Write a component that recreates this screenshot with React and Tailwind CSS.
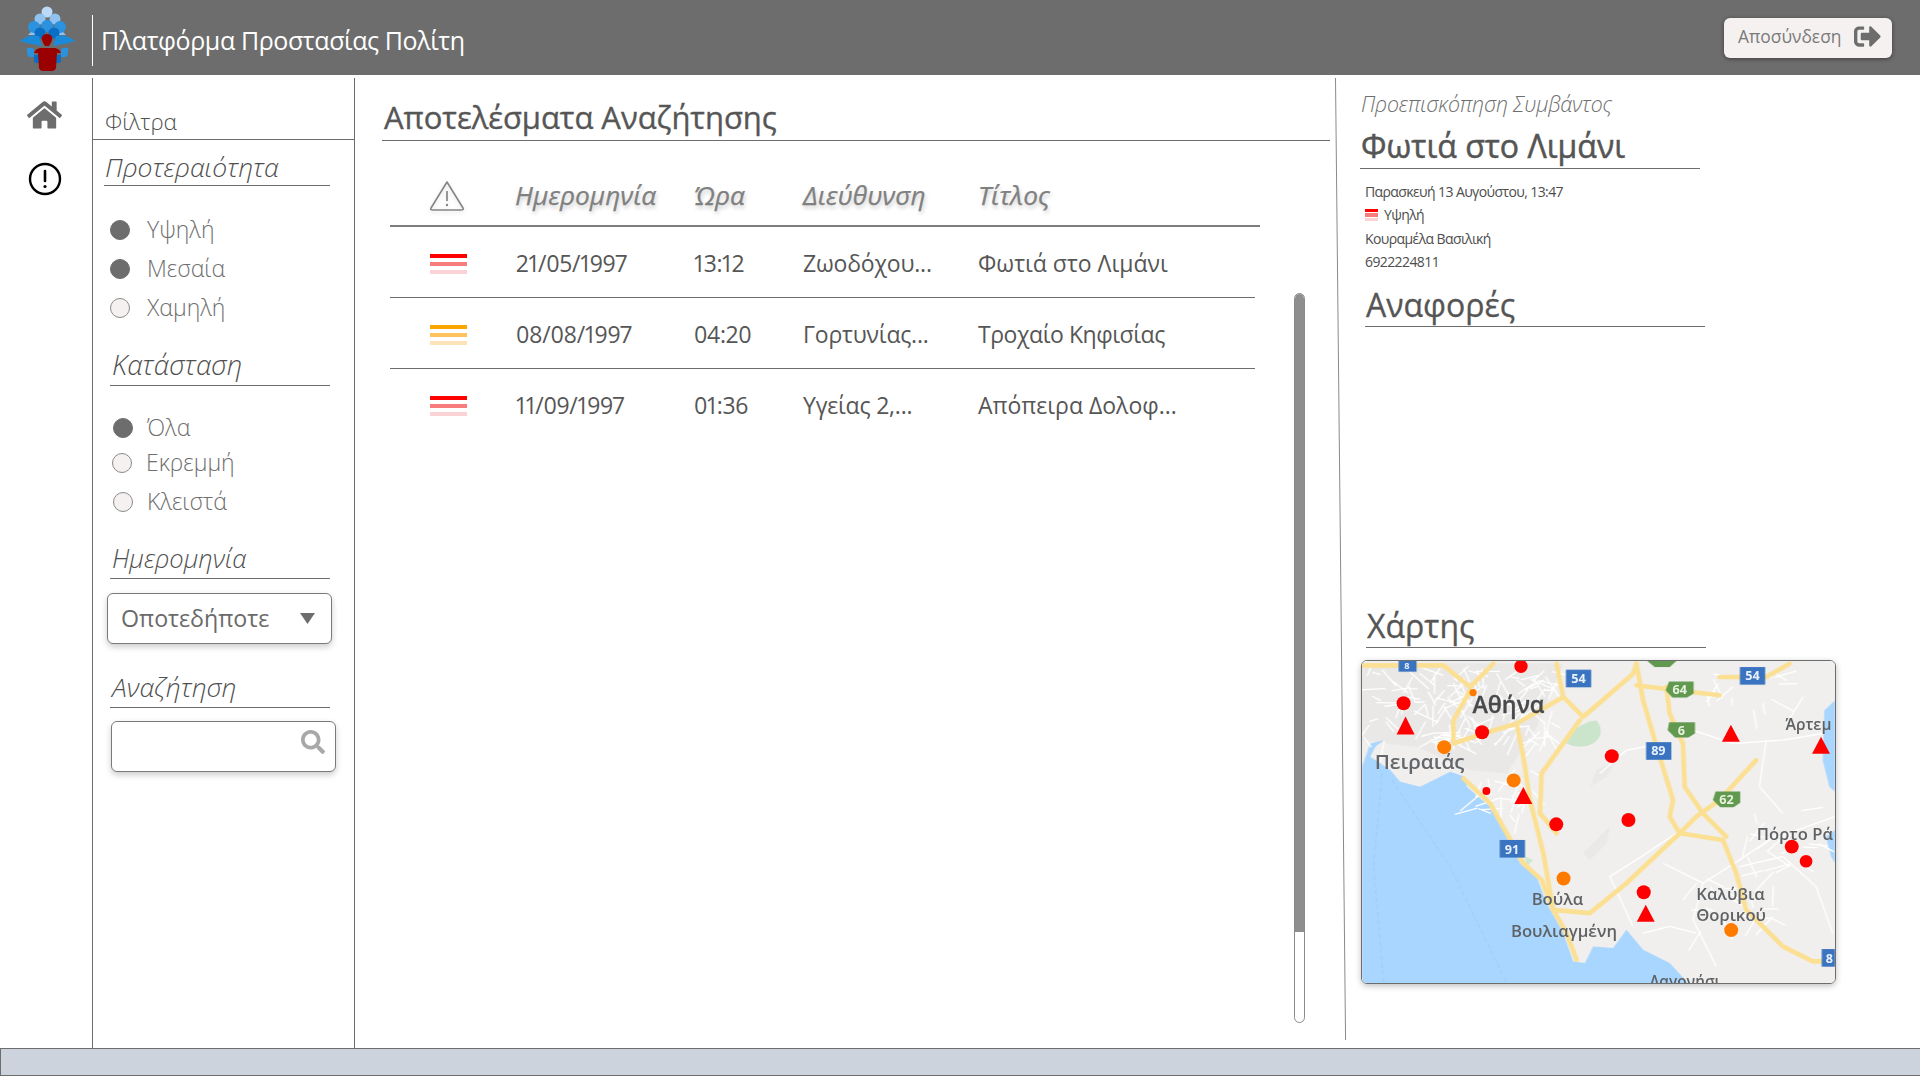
import React from "react";
import { FaHome, FaSearch, FaSignOutAlt } from "react-icons/fa";

const F = { fontFamily: '"Open Sans", "Noto Sans", sans-serif' };

function Logo() {
  return (
    <svg width="60" height="66" viewBox="18 6 60 66" className="shrink-0">
      <circle cx="48" cy="12" r="5.5" fill="#bcdaf6" />
      <circle cx="41" cy="19" r="5.5" fill="#8fc2ef" />
      <circle cx="56" cy="19" r="5.5" fill="#8fc2ef" />
      <path d="M29 35 L33 31 L38 35 Z" fill="#8fc2ef" />
      <path d="M67 35 L63 31 L58 35 Z" fill="#8fc2ef" />
      <circle cx="35" cy="27" r="6" fill="#2a92de" />
      <circle cx="48" cy="26" r="6" fill="#2a92de" />
      <circle cx="61" cy="27" r="6" fill="#2a92de" />
      <circle cx="41" cy="33" r="5.5" fill="#0a6ec4" />
      <circle cx="55" cy="33" r="5.5" fill="#0a6ec4" />
      <path d="M21 41 Q30 34 40 36 L43 46 L27 43 Z" fill="#1b8ad8" />
      <path d="M76 41 Q67 34 57 36 L54 46 L70 43 Z" fill="#1b8ad8" />
      <path d="M28 48 h5 q2 0 2 3 v6 h-4 q-3 -1 -3 -4 Z" fill="#2a92de" />
      <path d="M69 48 h-5 q-2 0 -2 3 v6 h4 q3 -1 3 -4 Z" fill="#2a92de" />
      <path d="M35 55 h5 v8 h-3 q-2 0 -2 -2 Z" fill="#0a6ec4" />
      <path d="M62 55 h-5 v8 h3 q2 0 2 -2 Z" fill="#0a6ec4" />
      <path d="M48 34 c4 0 6 3 5 6 c-1 3 -2 4 -3 6 h-4 c-1 -2 -2 -3 -3 -6 c-1 -3 1 -6 5 -6 Z" fill="#9a0000" />
      <path d="M35 53 q1 -4 6 -5 h15 q5 1 6 5 h-4 l-1 15 q-1 3 -4 3 h-9 q-3 0 -4 -3 l-1 -15 Z" fill="#9a0000" />
    </svg>
  );
}

function Bars({ c, w = "w-[37px]", h = "h-1", gap = "gap-1" }) {
  const colors = c === "red" ? ["bg-[#ff0000]", "bg-[#f87c7c]", "bg-[#fbd3d6]"] : ["bg-[#ffa500]", "bg-[#ffc25c]", "bg-[#ffe3b8]"];
  return (
    <div className={`flex flex-col ${gap} ${w}`}>
      {colors.map((x) => (
        <div key={x} className={`${h} ${x}`} />
      ))}
    </div>
  );
}

function Radio({ on, label, dotClass, rowClass = "h-[39px]" }) {
  return (
    <div className={`flex items-center ${rowClass}`}>
      <span className={`w-5 h-5 rounded-full shrink-0 border ${dotClass} ${on ? "bg-[#6d6d6d] border-[#6d6d6d]" : "bg-[#f4f1f0] border-[#8a8a8a]"}`} />
      <span className="text-[23px] font-light text-[#6f6f6f] leading-none">{label}</span>
    </div>
  );
}

function FilterHead({ children, className = "ml-[17px] w-[220px]", textClass = "text-[26.5px] pl-[2px] pb-[3px]" }) {
  return (
    <div className={`border-b border-[#6d6d6d] ${className}`}>
      <div className={`italic font-light text-[#4f4f4f] leading-[34px] ${textClass}`}>{children}</div>
    </div>
  );
}

function Row({ c, date, time, addr, title, border, titleClass = "" }) {
  return (
    <div className={`flex items-center h-[71px] pt-[2px] ${border ? "border-b border-[#6d6d6d] w-[865px]" : ""} text-[23px] text-[#565656]`}>
      <div className="w-[125px] pl-[40px] shrink-0 pt-[1px]"><Bars c={c} /></div>
      <div className="w-[178px] shrink-0 pl-[1px] proportional-nums tracking-[-0.3px]">{date}</div>
      <div className="w-[110px] shrink-0 pl-[1px] proportional-nums tracking-[-0.3px]">{time}</div>
      <div className="w-[175px] shrink-0 tracking-[-0.2px]">{addr}</div>
      <div className={titleClass}>{title}</div>
    </div>
  );
}

const streets = (() => {
  const out = [];
  let s = 7;
  const r = () => {
    s = (s * 16807) % 2147483647;
    return s / 2147483647;
  };
  const areas = [
    [40, 190, 330, 240, 70],
    [340, 200, 280, 240, 70],
    [380, 500, 170, 150, 22],
    [1050, 210, 350, 120, 16],
    [1180, 620, 260, 200, 20],
    [1020, 830, 260, 180, 18],
  ];
  areas.forEach(([x, y, w, h, n]) => {
    for (let i = 0; i < n; i++) {
      const a = x + r() * w;
      const b = y + r() * h;
      const ang = r() * Math.PI;
      const len = 25 + r() * 60;
      out.push(`M${a.toFixed(0)} ${b.toFixed(0)} L${(a + Math.cos(ang) * len).toFixed(0)} ${(b + Math.sin(ang) * len).toFixed(0)}`);
    }
  });
  return out.join(" ");
})();

function Map() {
  const road = "#fbdf92";
  return (
    <svg viewBox="35 182 1422 968" className="w-full h-full block" preserveAspectRatio="none">
      <rect x="35" y="182" width="1422" height="968" fill="#f0efed" />
      <g className="blur-[1.2px]">
        <path fill="#e2e2e2" opacity="0.5" d="M35 190 H640 L560 380 L470 520 L360 510 L200 440 L35 420 Z" />
        <path fill="#e6e5e2" opacity="0.6" d="M740 510 L800 480 L770 530 L720 560 Z" />
        <path fill="#e6e5e2" opacity="0.6" d="M700 760 L780 680 L770 730 L720 780 Z" />
        <path fill="#cbe5cc" d="M650 430 Q670 370 740 360 Q770 400 730 430 Q690 450 650 430 Z" />
        <path fill="#cfe6d0" d="M525 770 L550 780 L530 800 Z" />
        <path fill="#a9d6fe" d="M35 1150 V500 L60 430 L100 420 L75 440 L60 470 L120 510 L150 545 L210 560 L300 515 L345 530 L350 560 L420 620 L460 690 L510 790 L560 830 L590 910 L640 1000 L670 1085 L705 1090 L730 1040 L790 1045 L830 990 L880 1050 L960 1090 L1015 1150 Z" />
        <path fill="#a9d6fe" d="M1457 300 L1425 330 L1420 480 L1440 560 L1457 575 Z" />
        <path fill="#a9d6fe" d="M1457 690 L1430 710 L1445 770 L1457 790 Z" />
        <g stroke="#8fbde6" strokeWidth="2" fill="none" strokeDasharray="14 8" opacity="0.6">
          <path d="M95 520 L70 800 L100 1150" />
          <path d="M125 540 L300 800 L470 1150" />
        </g>
        <g stroke="#ffffff" strokeWidth="4" fill="none">
          <path d={streets} />
          <path d="M750 520 L830 450 L940 430" />
          <path d="M780 830 L860 780 L980 700" />
          <path d="M780 830 L850 980" />
          <path d="M940 790 L1060 850 L1170 780 L1260 720 L1457 650" />
          <path d="M1170 800 L1300 770 L1400 860 L1450 1000" />
          <path d="M1060 850 L1030 960 L1100 1100" />
          <path d="M1000 380 L1150 430 L1300 420 L1420 400" />
          <path d="M1250 420 L1230 560 L1300 640" />
          <path d="M880 1000 L960 980 L1040 1000" />
        </g>
        <g stroke={road} strokeWidth="14" fill="none" strokeLinejoin="round" strokeLinecap="round">
          <path d="M340 535 L420 610 L470 700 L520 790 L575 840 L610 930 L720 940 L830 850 L990 700 L1040 650 L1110 600 L1220 480" />
          <path d="M990 700 L1120 720 L1160 820 L1190 930 L1300 1040 L1390 1085 L1457 1085" />
          <path d="M860 190 L880 300 L930 470 L970 600 L960 650 L990 700" />
          <path d="M950 260 L960 340 L1000 430 L1005 560 L1060 640 L1130 710" />
          <path d="M860 255 L1110 285" />
          <path d="M35 195 L280 195 L360 260 L430 190" />
          <path d="M360 270 L310 360 L310 430 L400 400 L500 370 L640 290 L700 350 L850 220 L860 190" />
          <path d="M500 370 L520 470 L540 600 L580 760 L610 930" />
          <path d="M570 640 L575 520 L690 360" />
          <path d="M570 640 L620 700" />
          <path d="M640 290 L620 190" />
          <path d="M1110 230 L1250 230 L1320 190" />
          <path d="M610 930 L650 1000 L680 1080" />
        </g>
        <g fill="#3a73c0">
          <rect x="145" y="182" width="54" height="32" />
          <rect x="648" y="208" width="76" height="53" />
          <rect x="1171" y="200" width="76" height="53" />
          <rect x="889" y="426" width="76" height="53" />
          <rect x="449" y="720" width="76" height="53" />
          <rect x="1417" y="1048" width="40" height="53" />
        </g>
        <g fill="#61994f">
          <path d="M893 182 H980 L960 200 H915 Z" />
          <path d="M958 244 L1032 244 L1032 280 L1012 292 L968 292 L948 270 Z" />
          <path d="M958 366 H1036 V400 L1016 412 H976 L954 390 Z" />
          <path d="M1098 574 H1172 V608 L1152 622 H1112 L1090 600 Z" />
        </g>
      </g>
      <g style={F} fontSize="38" fontWeight="700" fill="#e8f0fa" textAnchor="middle">
        <text x="170" y="205" fontSize="28">8</text>
        <text x="686" y="248">54</text>
        <text x="1209" y="240">54</text>
        <text x="926" y="466">89</text>
        <text x="486" y="761">91</text>
        <text x="1440" y="1089">8</text>
      </g>
      <g style={F} fontSize="38" fontWeight="700" fill="#e8f2e0" textAnchor="middle">
        <text x="990" y="280">64</text>
        <text x="995" y="403">6</text>
        <text x="1131" y="611">62</text>
      </g>
      <g style={F} fill="#5f6265" fontWeight="600">
        <text x="367" y="337" fontSize="70" fill="#47494b" stroke="#47494b" strokeWidth="1">Αθήνα</text>
        <text x="73" y="507" fontSize="62" fill="#63666a">Πειραιάς</text>
        <text x="1308" y="388" fontSize="47">Άρτεμ</text>
        <text x="1222" y="719" fontSize="50">Πόρτο Ρά</text>
        <text x="545" y="915" fontSize="50">Βούλα</text>
        <text x="483" y="1012" fontSize="50">Βουλιαγμένη</text>
        <text x="1040" y="902" fontSize="50">Καλύβια</text>
        <text x="1040" y="965" fontSize="50">Θορικού</text>
        <text x="900" y="1163" fontSize="46">Λαγονήσι</text>
      </g>
      <g fill="#ff0000">
        <circle cx="513" cy="198" r="20" />
        <circle cx="160" cy="309" r="21" />
        <circle cx="396" cy="396" r="21" />
        <circle cx="786" cy="468" r="21" />
        <circle cx="409" cy="573" r="12" />
        <circle cx="619" cy="673" r="21" />
        <circle cx="836" cy="660" r="21" />
        <circle cx="882" cy="877" r="21" />
        <circle cx="1327" cy="740" r="21" />
        <circle cx="1370" cy="784" r="19" />
        <path d="M166 349 L193 403 H139 Z" />
        <path d="M1144 374 L1171 425 H1117 Z" />
        <path d="M1415 410 L1442 461 H1388 Z" />
        <path d="M520 561 L547 612 H493 Z" />
        <path d="M888 915 L915 966 H861 Z" />
      </g>
      <g fill="#ff7b00">
        <circle cx="369" cy="277" r="11" />
        <circle cx="282" cy="441" r="21" />
        <circle cx="491" cy="541" r="21" />
        <circle cx="641" cy="836" r="21" />
        <circle cx="1145" cy="991" r="21" />
      </g>
    </svg>
  );
}

export default function App() {
  const r1 = "ml-[17px] mr-[17px]";
  return (
    <div style={F} className="w-[1920px] h-[1076px] flex flex-col overflow-hidden bg-white">
      <header className="h-[75px] shrink-0 bg-[#6d6d6d] flex items-center relative">
        <div className="ml-[17px] mt-[2px]"><Logo /></div>
        <div className="w-px h-[51px] bg-white ml-[15px] mt-[6px]" />
        <div className="text-[25px] text-white ml-[8px] mt-[6px] tracking-[-0.4px] leading-none">Πλατφόρμα Προστασίας Πολίτη</div>
        <button className="ml-auto mr-[28px] mb-[-1px] w-[168px] h-[40px] rounded-[6px] bg-[#f4f1f0] shadow-[0_1px_4px_rgba(0,0,0,0.45)] flex items-center pl-[14px] pb-[3px] text-[#7a7a7a] text-[17.4px] gap-[13px]">
          <span>Αποσύνδεση</span>
          <FaSignOutAlt className="w-[27px] h-[27px] text-[#6d6d6d]" />
        </button>
      </header>

      <div className="flex-1 flex pt-[3px] min-h-0">
        <nav className="w-[93px] shrink-0 border-r border-[#6d6d6d] flex flex-col">
          <FaHome className="w-[35px] h-[36px] ml-[27px] mt-[19px] text-[#6d6d6d]" />
          <svg width="34" height="34" viewBox="0 0 34 34" className="ml-[28px] mt-[29px]">
            <circle cx="17" cy="17" r="15" fill="none" stroke="#000" strokeWidth="2.4" />
            <path d="M17 9 V19" stroke="#000" strokeWidth="2.6" strokeLinecap="round" />
            <circle cx="17" cy="24.5" r="1.6" fill="#000" />
          </svg>
        </nav>

        <aside className="w-[262px] shrink-0 border-r border-[#6d6d6d] flex flex-col">
          <div className="h-[62px] border-b border-[#6d6d6d] flex items-end pl-[12px] pb-[2px]">
            <span className="text-[22.5px] font-light text-[#4f4f4f] leading-[30px]">Φίλτρα</span>
          </div>
          <div className="mt-[10px]"><FilterHead className="ml-[11px] w-[226px]" textClass="text-[26.5px] pl-[1px] pb-[1px]">Προτεραιότητα</FilterHead></div>
          <div className="mt-[24px] flex flex-col">
            <Radio on label="Υψηλή" dotClass={r1} />
            <Radio on label="Μεσαία" dotClass={r1} />
            <Radio label="Χαμηλή" dotClass={r1} />
          </div>
          <FilterHead className="mt-[21px] ml-[17px] w-[220px]" textClass="text-[27.5px] pl-[2px] pb-[3px]">Κατάσταση</FilterHead>
          <div className="mt-[25px] flex flex-col">
            <Radio on label="Όλα" dotClass="ml-[20px] mr-[14px]" rowClass="h-[33px]" />
            <Radio label="Εκρεμμή" dotClass="ml-[19px] mr-[14px]" rowClass="h-[37px]" />
            <Radio label="Κλειστά" dotClass="ml-[20px] mr-[14px]" rowClass="h-[41px]" />
          </div>
          <FilterHead className="mt-[19px] ml-[17px] w-[220px]" textClass="text-[25.5px] pl-[2px] pb-[3px]">Ημερομηνία</FilterHead>
          <div className="mt-[14px] ml-[14px] w-[225px] h-[51px] rounded-[6px] border border-[#7a7a7a] shadow-[0_3px_6px_rgba(0,0,0,0.2)] flex items-center pl-[13px] pr-[16px] justify-between bg-white">
            <span className="text-[23.2px] text-[#6a6a6a]">Οποτεδήποτε</span>
            <svg width="15" height="11" viewBox="0 0 15 11"><path d="M0 0 H15 L7.5 11 Z" fill="#6d6d6d" /></svg>
          </div>
          <FilterHead className="mt-[26px] ml-[17px] w-[220px]">Αναζήτηση</FilterHead>
          <div className="mt-[13px] ml-[18px] w-[225px] h-[51px] rounded-[6px] border border-[#7a7a7a] shadow-[0_3px_6px_rgba(0,0,0,0.2)] flex justify-end pr-[10px] pt-[8px] bg-white">
            <FaSearch className="w-[24px] h-[24px] text-[#a8a8a8]" />
          </div>
        </aside>

        <main className="flex-1 min-w-0 pl-[27px] pr-[6px] relative">
          <div className="h-[63px] border-b border-[#6d6d6d] flex items-end pl-[2px]">
            <h1 className="text-[31px] font-normal text-[#565656] leading-[40px] mb-[3px] tracking-[-0.05px] [-webkit-text-stroke:0.35px_#565656]">Αποτελέσματα Αναζήτησης</h1>
          </div>
          <div className="ml-[8px]">
            <div className="flex items-center pt-[25px] h-[86px] w-[870px] border-b-2 border-[#7d7d7d] text-[26.3px] italic text-[#808080] [text-shadow:1px_3px_4px_rgba(0,0,0,0.22)] [-webkit-text-stroke:0.25px_#808080]">
              <div className="w-[125px] pl-[39px] shrink-0">
                <svg width="36" height="32" viewBox="0 0 36 32" className="drop-shadow-[0_2px_2px_rgba(0,0,0,0.12)]">
                  <path d="M18 2 L34 28 Q35 30 32 30 H4 Q1 30 2 28 Z" fill="none" stroke="#858585" strokeWidth="1.6" strokeLinejoin="round" />
                  <path d="M18 11 V21" stroke="#858585" strokeWidth="1.7" />
                  <circle cx="18" cy="25" r="1.2" fill="#858585" />
                </svg>
              </div>
              <div className="w-[178px] shrink-0">Ημερομηνία</div>
              <div className="w-[110px] shrink-0 pl-[1px]">Ώρα</div>
              <div className="w-[175px] shrink-0">Διεύθυνση</div>
              <div>Τίτλος</div>
            </div>
            <Row c="red" date="21/05/1997" time="13:12" addr="Ζωοδόχου..." title="Φωτιά στο Λιμάνι" border />
            <Row c="orange" date="08/08/1997" time="04:20" addr="Γορτυνίας..." title="Τροχαίο Κηφισίας" titleClass="tracking-[-0.45px]" border />
            <Row c="red" date="11/09/1997" time="01:36" addr="Υγείας 2,..." title="Απόπειρα Δολοφ..." />
          </div>
          <div className="absolute left-[939px] top-[215px] w-[11px] h-[730px] rounded-full border border-[#8a8a8a] bg-white overflow-hidden">
            <div className="h-[638px] bg-[#8e8e8e]" />
          </div>
        </main>

        <section className="w-[584px] shrink-0 relative pl-[24px]">
          <div className="absolute left-[-1px] top-0 bottom-[8px] w-px bg-[#8a8a8a] origin-top -rotate-[0.6deg]" />
          <div className="mt-[11px] text-[21.4px] italic font-light text-[#6f6f6f] leading-[30px] tracking-[-0.2px] pl-[1px]">Προεπισκόπηση Συμβάντος</div>
          <div className="w-[340px] border-b border-[#6d6d6d] h-[50px] flex items-end">
            <div className="text-[32px] text-[#555] leading-[42px] pl-[1px] mb-[1px] [-webkit-text-stroke:0.5px_#555]">Φωτιά στο Λιμάνι</div>
          </div>
          <div className="pl-[5px] pt-[11px] text-[14px] leading-[23.3px] text-[#4d4d4d] tracking-[-0.6px]">
            <div>Παρασκευή 13 Αυγούστου, 13:47</div>
            <div className="flex items-center gap-[6px]">
              <Bars c="red" w="w-[13px]" h="h-[3.5px]" gap="gap-[1px]" />
              <span>Υψηλή</span>
            </div>
            <div>Κουραμέλα Βασιλική</div>
            <div>6922224811</div>
          </div>
          <div className="ml-[5px] mt-[10px] w-[340px] border-b border-[#6d6d6d] h-[44px] flex items-end">
            <div className="text-[32px] text-[#555] leading-[42px] pl-[1px] [-webkit-text-stroke:0.3px_#555]">Αναφορές</div>
          </div>
          <div className="ml-[6px] mt-[275px] w-[340px] border-b border-[#6d6d6d] h-[46px] flex items-end">
            <div className="text-[32px] text-[#555] leading-[42px] pl-[1px] [-webkit-text-stroke:0.3px_#555]">Χάρτης</div>
          </div>
          <div className="mt-[12px] ml-[1px] w-[475px] h-[324px] rounded-[6px] border border-[#6d6d6d] overflow-hidden shadow-[0_2px_6px_rgba(0,0,0,0.25)]">
            <Map />
          </div>
        </section>
      </div>

      <footer className="h-[28px] shrink-0 bg-[#ccd3dd] border-t border-b border-l border-[#6d6d6d]" />
    </div>
  );
}
